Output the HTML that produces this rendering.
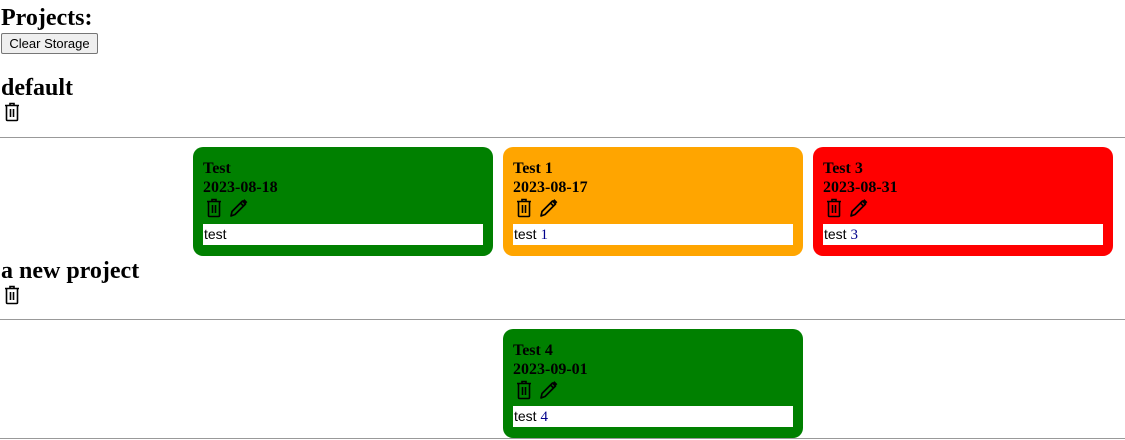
<!DOCTYPE html>
<html><head><style>
body{margin:0;width:1125px;height:440px;position:relative;overflow:hidden;background:#fff;font-family:"Liberation Serif",serif;}
.a{position:absolute}
h{font-weight:bold;font-size:24px;position:absolute;line-height:1}
.btn{position:absolute;left:1px;top:33px;width:97px;height:21px;box-sizing:border-box;border:1px solid #767676;border-radius:2px;background:#efefef;font:13px "Liberation Sans",sans-serif;text-align:center;line-height:19px}
.hr{position:absolute;left:0;width:1125px;height:0;border-top:1px solid #999}
.card{position:absolute;width:300px;height:109px;border-radius:10px}
.card .t{position:absolute;left:10px;top:12px;font-weight:bold;font-size:16px;line-height:19px}
.card .ic{position:absolute;left:11px;top:51px}
.card .box{position:absolute;left:10px;top:77px;width:280px;height:21px;background:#fff;font:14px "Liberation Sans",sans-serif;line-height:21px;padding-left:1px;box-sizing:border-box}
.n{font-family:"Liberation Serif",serif;font-size:15px;color:#00008b}
</style></head><body>
<svg width="0" height="0" style="position:absolute"><defs>
<g id="tr"><path d="M3 3.5h14M8 3.5V1.5h4v2M4.5 3.5v14a1 1 0 0 0 1 1h9a1 1 0 0 0 1-1v-14M8.5 7v8M11.5 7v8" fill="none" stroke="#000" stroke-width="1.6"/></g>
<g id="pn"><path d="M3 18l1-4.5L14.5 3l3 3L7 16.5zM12.5 5l3 3" fill="none" stroke="#000" stroke-width="1.7" stroke-linejoin="round"/><path d="M15.5 2l3 3" stroke="#000" stroke-width="2.5"/></g>
</defs></svg>
<h style="left:1px;top:6px">Projects:</h>
<div class="btn">Clear Storage</div>
<h style="left:1px;top:76px">default</h>
<svg class="a" style="left:2px;top:102px" width="20" height="20"><use href="#tr"/></svg>
<div class="hr" style="top:137px"></div>

<div class="card" style="left:193px;top:147px;background:#008000"><div class="t">Test<br>2023-08-18</div><svg class="ic" width="46" height="22"><use href="#tr"/><use href="#pn" x="24"/></svg><div class="box">test</div></div>
<div class="card" style="left:503px;top:147px;background:#ffa500"><div class="t">Test 1<br>2023-08-17</div><svg class="ic" width="46" height="22"><use href="#tr"/><use href="#pn" x="24"/></svg><div class="box">test <span class="n">1</span></div></div>
<div class="card" style="left:813px;top:147px;background:#ff0000"><div class="t">Test 3<br>2023-08-31</div><svg class="ic" width="46" height="22"><use href="#tr"/><use href="#pn" x="24"/></svg><div class="box">test <span class="n">3</span></div></div>

<h style="left:1px;top:259px">a new project</h>
<svg class="a" style="left:2px;top:285px" width="20" height="20"><use href="#tr"/></svg>
<div class="hr" style="top:319px"></div>
<div class="card" style="left:503px;top:329px;background:#008000"><div class="t">Test 4<br>2023-09-01</div><svg class="ic" width="46" height="22"><use href="#tr"/><use href="#pn" x="24"/></svg><div class="box">test <span class="n">4</span></div></div>
<div class="hr" style="top:438px"></div>
</body></html>
